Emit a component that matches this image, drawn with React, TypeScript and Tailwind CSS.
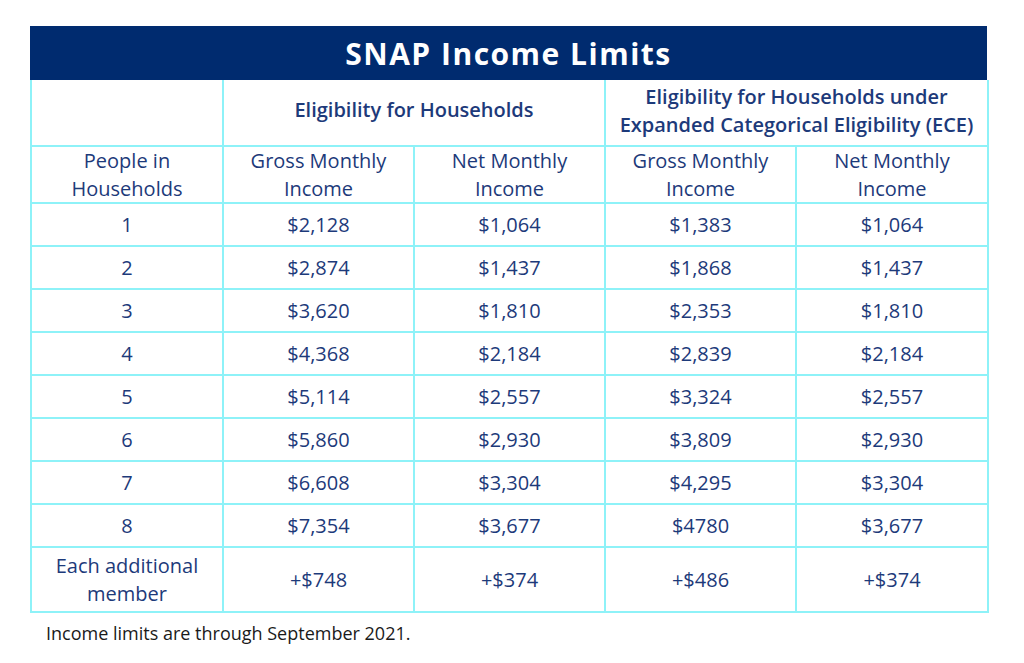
const rows = [
  ["1", "$2,128", "$1,064", "$1,383", "$1,064"],
  ["2", "$2,874", "$1,437", "$1,868", "$1,437"],
  ["3", "$3,620", "$1,810", "$2,353", "$1,810"],
  ["4", "$4,368", "$2,184", "$2,839", "$2,184"],
  ["5", "$5,114", "$2,557", "$3,324", "$2,557"],
  ["6", "$5,860", "$2,930", "$3,809", "$2,930"],
  ["7", "$6,608", "$3,304", "$4,295", "$3,304"],
  ["8", "$7,354", "$3,677", "$4780", "$3,677"],
];

const cell = "border-2 border-[#8ef2f8] text-center align-middle leading-[27.5px]";

export default function App() {
  return (
    <div className="w-[1024px] h-[663px] bg-white pt-[26px] pl-[30px] font-['Open_Sans',sans-serif] text-[#1d3a7a]">
      <div className="w-[957px]">
        <div className="h-[54px] bg-[#002b6f] flex items-center justify-center text-white text-[30px] font-bold tracking-[0.05em]">
          SNAP Income Limits
        </div>
        <table className="w-full border-collapse table-fixed text-[20px]">
          <colgroup>
            <col className="w-[192px]" />
            <col className="w-[191px]" />
            <col className="w-[191px]" />
            <col className="w-[191px]" />
            <col className="w-[192px]" />
          </colgroup>
          <tbody>
            <tr className="h-[66px] font-semibold">
              <td className={`${cell} border-t-0`}></td>
              <td colSpan={2} className={`${cell} border-t-0 pb-[6px]`}>
                Eligibility for Households
              </td>
              <td colSpan={2} className={`${cell} border-t-0 pb-[4px]`}>
                Eligibility for Households under
                <br />
                Expanded Categorical Eligibility (ECE)
              </td>
            </tr>
            <tr className="h-[57px]">
              <td className={cell}>
                People in
                <br />
                Households
              </td>
              <td className={cell}>
                Gross Monthly
                <br />
                Income
              </td>
              <td className={cell}>
                Net Monthly
                <br />
                Income
              </td>
              <td className={cell}>
                Gross Monthly
                <br />
                Income
              </td>
              <td className={cell}>
                Net Monthly
                <br />
                Income
              </td>
            </tr>
            {rows.map((r) => (
              <tr key={r[0]} className="h-[43px]">
                {r.map((v, i) => (
                  <td key={i} className={cell}>
                    {v}
                  </td>
                ))}
              </tr>
            ))}
            <tr className="h-[65px]">
              <td className={cell}>
                Each additional
                <br />
                member
              </td>
              <td className={cell}>+$748</td>
              <td className={cell}>+$374</td>
              <td className={cell}>+$486</td>
              <td className={cell}>+$374</td>
            </tr>
          </tbody>
        </table>
        <p className="mt-[8px] pl-[16px] text-[18px] text-[#1a1a1a] leading-[24px]">
          Income limits are through September 2021.
        </p>
      </div>
    </div>
  );
}
